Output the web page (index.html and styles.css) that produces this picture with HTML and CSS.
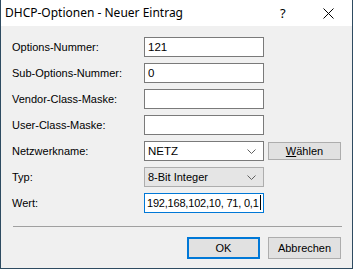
FILE: index.html
```html
<!DOCTYPE html>
<html>
<head>
<meta charset="utf-8">
<link rel="stylesheet" href="styles.css">
</head>
<body>
<div class="window">
  <div class="titlebar">
    <span class="title">DHCP-Optionen - Neuer Eintrag</span>
    <span class="help">?</span>
    <span class="close">
      <svg width="11" height="11" viewBox="0 0 11 11"><path d="M0.5 0.5 L10.5 10.5 M10.5 0.5 L0.5 10.5" stroke="#000" stroke-width="1" fill="none"/></svg>
    </span>
  </div>
  <div class="content">
    <div class="form">
      <label class="lbl">Options-Nummer:</label>
      <div class="input">121</div>
      <div></div>

      <label class="lbl">Sub-Options-Nummer:</label>
      <div class="input">0</div>
      <div></div>

      <label class="lbl">Vendor-Class-Maske:</label>
      <div class="input"></div>
      <div></div>

      <label class="lbl">User-Class-Maske:</label>
      <div class="input"></div>
      <div></div>

      <label class="lbl">Netzwerkname:</label>
      <div class="input combo"><span>NETZ</span><svg class="chev" width="9" height="5" viewBox="0 0 9 5"><path d="M0.5 0.5 L4.5 4.5 L8.5 0.5" stroke="#606060" fill="none"/></svg></div>
      <div class="btn small"><u>W</u>ählen</div>

      <label class="lbl">Typ:</label>
      <div class="input combo list"><span>8-Bit Integer</span><svg class="chev" width="9" height="5" viewBox="0 0 9 5"><path d="M0.5 0.5 L4.5 4.5 L8.5 0.5" stroke="#606060" fill="none"/></svg></div>
      <div></div>

      <label class="lbl">Wert:</label>
      <div class="input focus">192,168,102,10, 71, 0,1<span class="caret"></span></div>
      <div></div>
    </div>
    <div class="sep"></div>
    <div class="buttons">
      <div class="btn default">OK</div>
      <div class="btn">Abbrechen</div>
    </div>
  </div>
</div>
</body>
</html>
```

FILE: styles.css
```css
html, body {
  margin: 0;
  padding: 0;
  background: #f0f0f0;
}
.window {
  width: 353px;
  height: 269px;
  box-sizing: border-box;
  border-left: 1px solid #2e4b61;
  border-right: 1px solid #2e4b61;
  border-bottom: 1px solid #2e4b61;
  background: #f0f0f0;
  display: flex;
  flex-direction: column;
  font-family: "Liberation Sans", Arial, sans-serif;
  font-size: 11px;
  color: #000;
}
.titlebar {
  height: 26px;
  background: #fff;
  display: flex;
  align-items: center;
}
.title {
  font-family: "Noto Sans", sans-serif;
  font-size: 12px;
  margin-left: 4px;
  flex: 1;
  padding-bottom: 1px;
}
.help {
  font-family: "Noto Sans", sans-serif;
  font-size: 13px;
  width: 10px;
  margin-right: 33px;
}
.close {
  width: 11px;
  height: 11px;
  margin-right: 18px;
  display: flex;
}
.content {
  flex: 1;
  display: flex;
  flex-direction: column;
  padding: 11px 11px 0 11px;
}
.form {
  display: grid;
  grid-template-columns: 128px 120px 73px;
  column-gap: 4px;
  row-gap: 6px;
  grid-auto-rows: 20px;
  align-items: center;
}
.lbl {
  padding-bottom: 1px;
}
.input {
  height: 20px;
  box-sizing: border-box;
  border: 1px solid #7a7a7a;
  background: #fff;
  display: flex;
  align-items: center;
  padding-left: 3px;
  padding-bottom: 1px;
  font-size: 11.5px;
  white-space: nowrap;
}
.combo {
  justify-content: space-between;
  padding-right: 7px;
}
.combo.list {
  background: #e5e5e5;
  border-color: #adadad;
  font-size: 11px;
}
.chev {
  margin-top: 2px;
}
.focus {
  border-color: #0078d7;
  padding-left: 2px;
  font-size: 11px;
  letter-spacing: -0.2px;
}
.caret {
  display: inline-block;
  width: 1px;
  height: 15px;
  background: #000;
  margin-left: 1px;
}
.btn {
  height: 22px;
  box-sizing: border-box;
  background: #e1e1e1;
  border: 1px solid #adadad;
  display: flex;
  align-items: center;
  justify-content: center;
  font-size: 11px;
  width: 73px;
}
.btn.small {
  height: 18px;
}
.btn.default {
  border: 2px solid #0078d7;
}
.sep {
  height: 1px;
  background: #a0a0a0;
  margin-top: 13px;
  margin-left: 1px;
  width: 329px;
}
.buttons {
  display: flex;
  justify-content: flex-end;
  gap: 8px;
  margin-top: 10px;
}
```
